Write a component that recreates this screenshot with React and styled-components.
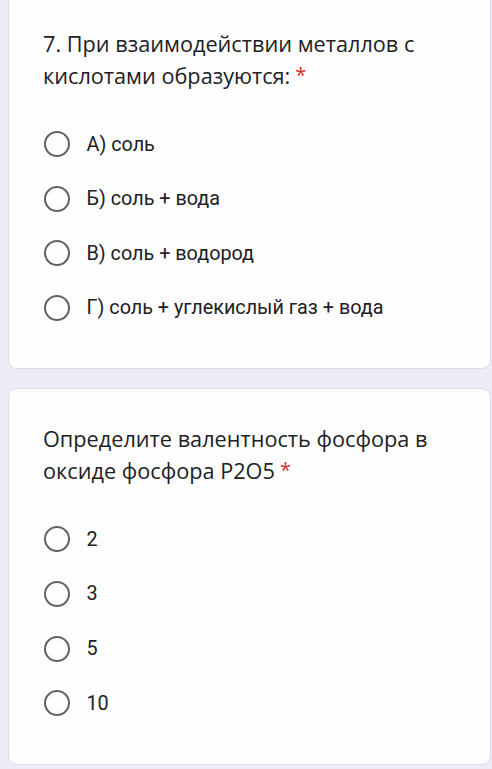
import React from "react";
import styled, { createGlobalStyle } from "styled-components";

const Global = createGlobalStyle`
  html, body { margin: 0; padding: 0; background: #eeedf7; }
  body { width: 492px; height: 769px; overflow: hidden; }
`;

const Page = styled.div`
  display: flex;
  flex-direction: column;
  gap: 19px;
  padding: 0 1px 0 8px;
  margin-top: -11px;
`;

const Card = styled.section`
  background: #fefefe;
  border: 1px solid #dcdce2;
  border-radius: 9px;
  padding: ${(p) => p.$top}px 20px 33px 34px;
  display: flex;
  flex-direction: column;
  gap: 25.7px;
`;

const Title = styled.div`
  font-family: "Open Sans", "Noto Sans", sans-serif;
  font-size: 21.7px;
  line-height: 31px;
  color: #202124;
`;

const Star = styled.span`
  color: #d93025;
  margin-left: 5px;
  font-size: 20px;
  vertical-align: 2px;
`;

const Options = styled.div`
  display: flex;
  flex-direction: column;
`;

const Row = styled.label`
  display: flex;
  align-items: center;
  height: 54.67px;
  gap: 17px;
`;

const Radio = styled.span`
  width: 26px;
  height: 26px;
  box-sizing: border-box;
  border: 2.8px solid #5f6368;
  border-radius: 50%;
  flex: none;
  margin-left: 0.5px;
`;

const Label = styled.span`
  font-family: Roboto, "Noto Sans", sans-serif;
  font-size: 19.8px;
  color: #202124;
`;

const questions = [
  {
    top: 38,
    title: ["7. При взаимодействии металлов с", "кислотами образуются:"],
    options: [
      "А) соль",
      "Б) соль + вода",
      "В) соль + водород",
      "Г) соль + углекислый газ + вода",
    ],
  },
  {
    top: 34,
    title: ["Определите валентность фосфора в", "оксиде фосфора P2O5"],
    options: ["2", "3", "5", "10"],
  },
];

export default function App() {
  return (
    <>
      <Global />
      <Page>
        {questions.map((q, i) => (
          <Card key={i} $top={q.top}>
            <Title>
              {q.title[0]}
              <br />
              {q.title[1]}
              <Star>*</Star>
            </Title>
            <Options>
              {q.options.map((o) => (
                <Row key={o}>
                  <Radio />
                  <Label>{o}</Label>
                </Row>
              ))}
            </Options>
          </Card>
        ))}
      </Page>
    </>
  );
}
